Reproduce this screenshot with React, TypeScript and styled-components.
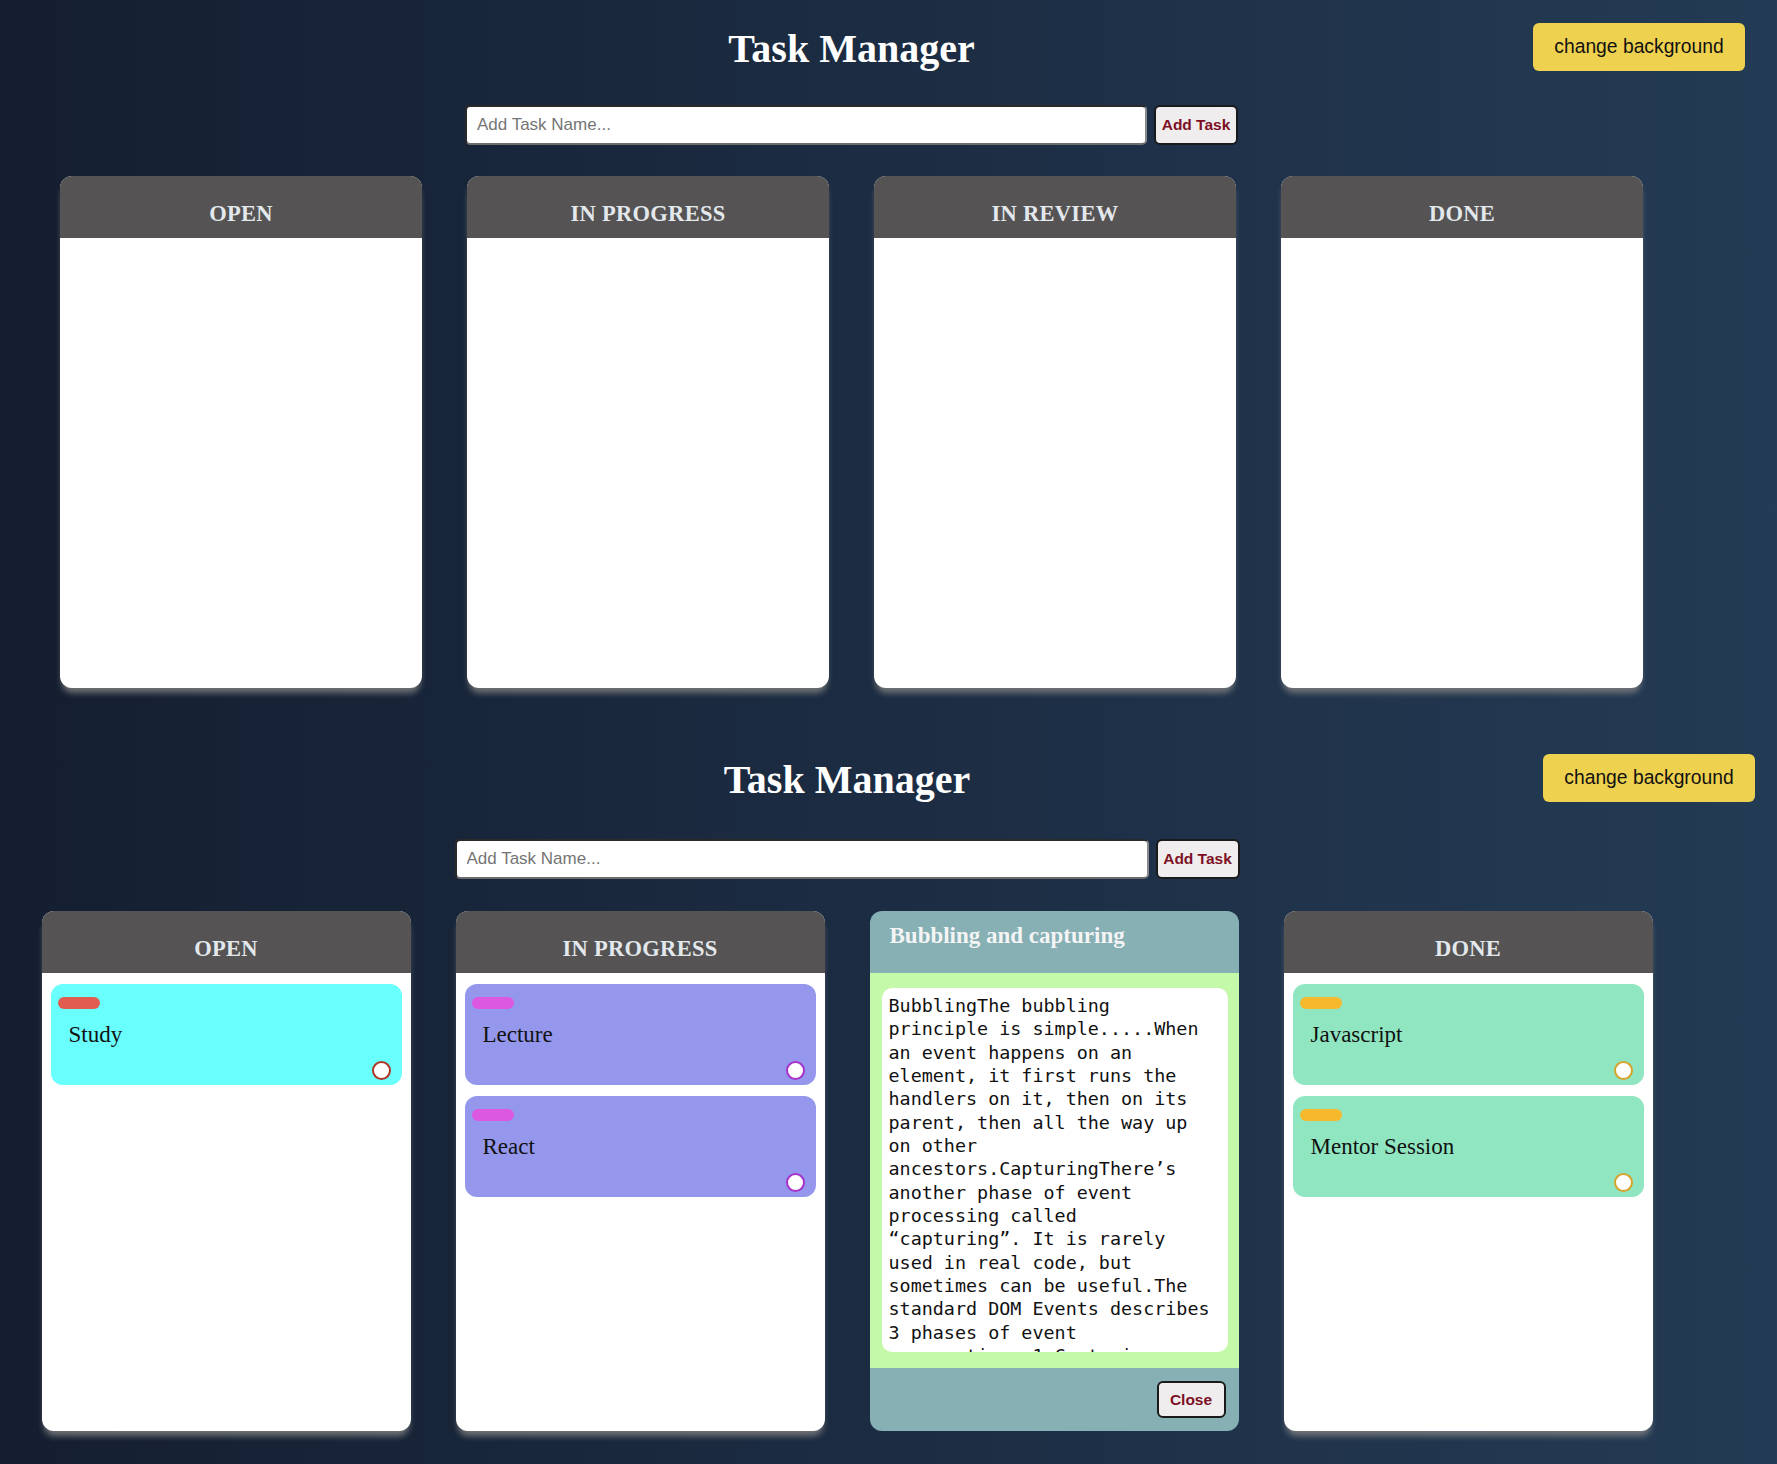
import React from "react";
import styled, { createGlobalStyle } from "styled-components";

const GlobalStyle = createGlobalStyle`
  html, body { margin: 0; padding: 0; }
  body {
    min-height: 1464px;
    background: linear-gradient(to right, #141e30, #243b55);
    font-family: "Liberation Sans", Arial, sans-serif;
  }
`;

const Section = styled.section<{ $top: number; $h: number }>`
  box-sizing: border-box;
  height: ${(p) => p.$h}px;
  padding-top: ${(p) => p.$top}px;
`;

const Header = styled.header<{ $center: number }>`
  display: grid;
  grid-template-columns: ${(p) => p.$center - 250}px 500px 1fr;
  align-items: center;
  height: 48px;
`;

const Title = styled.h1`
  grid-column: 2;
  margin: 0;
  padding-top: 3px;
  text-align: center;
  font-family: "Liberation Serif", "Times New Roman", serif;
  font-weight: 700;
  font-size: 40px;
  color: #ffffff;
`;

const BgButton = styled.button<{ $right: number }>`
  grid-column: 3;
  justify-self: end;
  margin-right: ${(p) => p.$right}px;
  width: 212px;
  height: 48px;
  border: none;
  border-radius: 6px;
  background: #efd150;
  color: #111;
  font-family: "Liberation Sans", Arial, sans-serif;
  font-size: 19.3px;
  padding: 0;
  cursor: pointer;
`;

const Form = styled.form<{ $center: number; $mt: number }>`
  display: flex;
  justify-content: center;
  gap: 7px;
  width: ${(p) => p.$center * 2}px;
  margin-top: ${(p) => p.$mt}px;
`;

const TaskInput = styled.input<{ $w: number }>`
  box-sizing: border-box;
  width: ${(p) => p.$w}px;
  height: 40px;
  border-radius: 5px;
  border: 2px solid;
  border-color: #2a2a2a #8a8a8a #6c6c6c #2a2a2a;
  background: #fff;
  padding: 0 10px;
  font-family: "Liberation Sans", Arial, sans-serif;
  font-size: 17px;
  color: #222;
  &::placeholder {
    color: #757575;
  }
`;

const DarkButton = styled.button<{ $w: number; $h: number }>`
  box-sizing: border-box;
  width: ${(p) => p.$w}px;
  height: ${(p) => p.$h}px;
  border: 2px solid #1a1a1a;
  border-radius: 6px;
  background: #efeded;
  color: #7d1025;
  font-family: "Liberation Sans", Arial, sans-serif;
  font-weight: 700;
  font-size: 15.5px;
  padding: 0;
  cursor: pointer;
`;

const Board = styled.div<{ $center: number; $gap: number; $mt: number }>`
  display: flex;
  justify-content: center;
  gap: ${(p) => p.$gap}px;
  width: ${(p) => p.$center * 2}px;
  margin-top: ${(p) => p.$mt}px;
`;

const Column = styled.div<{ $w: number; $h: number }>`
  box-sizing: border-box;
  width: ${(p) => p.$w}px;
  height: ${(p) => p.$h}px;
  display: flex;
  flex-direction: column;
  border-radius: 12px;
  background: #ffffff;
  overflow: hidden;
  box-shadow: 0 7px 6px -2px rgba(128, 128, 128, 0.85);
`;

const ColumnHeader = styled.div`
  box-sizing: border-box;
  height: 62px;
  flex: none;
  padding-top: 25px;
  background: #555353;
  text-align: center;
  font-family: "Liberation Serif", "Times New Roman", serif;
  font-weight: 700;
  font-size: 22.5px;
  line-height: 26px;
  letter-spacing: 0.3px;
  color: #e2e8ec;
`;

const ColumnBody = styled.div`
  flex: 1;
  display: flex;
  flex-direction: column;
  gap: 11px;
  padding: 11px 9px;
`;

const Card = styled.div<{ $bg: string }>`
  box-sizing: border-box;
  height: 101px;
  flex: none;
  display: flex;
  flex-direction: column;
  border-radius: 12px;
  background: ${(p) => p.$bg};
  padding: 13px 11px 5px 7px;
`;

const Tag = styled.span<{ $color: string }>`
  display: block;
  width: 42px;
  height: 12px;
  border-radius: 6px;
  background: ${(p) => p.$color};
`;

const CardTitle = styled.div`
  margin-top: 13px;
  padding-left: 11px;
  font-family: "Liberation Serif", "Times New Roman", serif;
  font-size: 23px;
  line-height: 26px;
  color: #111;
`;

const Check = styled.span<{ $color: string }>`
  box-sizing: border-box;
  margin-top: auto;
  align-self: flex-end;
  width: 19px;
  height: 19px;
  border-radius: 50%;
  border: 2px solid ${(p) => p.$color};
  background: #ffffff;
`;

const Detail = styled.div<{ $w: number; $h: number }>`
  box-sizing: border-box;
  width: ${(p) => p.$w}px;
  height: ${(p) => p.$h}px;
  display: flex;
  flex-direction: column;
  border-radius: 12px;
  overflow: hidden;
  background: #86b0b4;
`;

const DetailHeader = styled.div`
  box-sizing: border-box;
  height: 62px;
  flex: none;
  padding: 12px 18px 0 20px;
  font-family: "Liberation Serif", "Times New Roman", serif;
  font-weight: 700;
  font-size: 23px;
  line-height: 26px;
  color: #f4f4f4;
`;

const DetailBody = styled.div`
  box-sizing: border-box;
  height: 395px;
  flex: none;
  background: #c3f9a8;
  padding: 15px 11px 16px 12px;
`;

const TextBox = styled.div`
  box-sizing: border-box;
  height: 100%;
  border-radius: 10px;
  background: #ffffff;
  overflow: hidden;
  padding: 6px 12px 0 7px;
  font-family: "DejaVu Sans Mono", "Liberation Mono", monospace;
  font-size: 18.4px;
  line-height: 23.33px;
  color: #111;
`;

const DetailFooter = styled.div`
  flex: 1;
  display: flex;
  justify-content: flex-end;
  align-items: center;
  padding-right: 13px;
`;

type Task = { name: string; bg: string; tag: string; ring: string };

const study: Task = { name: "Study", bg: "#69fffd", tag: "#e05d4f", ring: "#b03525" };
const lecture: Task = { name: "Lecture", bg: "#9497eb", tag: "#dd58e0", ring: "#a533c9" };
const react: Task = { name: "React", bg: "#9497eb", tag: "#dd58e0", ring: "#a533c9" };
const js: Task = { name: "Javascript", bg: "#8fe6c1", tag: "#f6b92e", ring: "#d6a42b" };
const mentor: Task = { name: "Mentor Session", bg: "#8fe6c1", tag: "#f6b92e", ring: "#d6a42b" };

const DETAIL_TEXT =
  "BubblingThe bubbling principle is simple.....When an event happens on an element, it first runs the handlers on it, then on its parent, then all the way up on other ancestors.CapturingThere\u2019s another phase of event processing called \u201Ccapturing\u201D. It is rarely used in real code, but sometimes can be useful.The standard DOM Events describes 3 phases of event propagation: 1.Capturing phase \u2013 the event goes down to the element. 2.Target phase \u2013 the event reached the target element. 3.Bubbling phase \u2013 the event bubbles up from the element.";

type SectionConf = {
  center: number;
  top: number;
  height: number;
  formMt: number;
  boardMt: number;
  colW: number;
  colH: number;
  gap: number;
  inputW: number;
  btnRight: number;
  columns: { title: string; tasks: Task[]; detail?: boolean }[];
};

const sections: SectionConf[] = [
  {
    center: 851.5,
    top: 22,
    height: 732,
    formMt: 35,
    boardMt: 31,
    colW: 362,
    colH: 512,
    gap: 45,
    inputW: 682,
    btnRight: 32,
    columns: [
      { title: "OPEN", tasks: [] },
      { title: "IN PROGRESS", tasks: [] },
      { title: "IN REVIEW", tasks: [] },
      { title: "DONE", tasks: [] },
    ],
  },
  {
    center: 847,
    top: 21,
    height: 732,
    formMt: 38,
    boardMt: 32,
    colW: 369,
    colH: 520,
    gap: 45,
    inputW: 694,
    btnRight: 22,
    columns: [
      { title: "OPEN", tasks: [study] },
      { title: "IN PROGRESS", tasks: [lecture, react] },
      { title: "IN REVIEW", tasks: [], detail: true },
      { title: "DONE", tasks: [js, mentor] },
    ],
  },
];

function TaskCard({ task }: { task: Task }) {
  return (
    <Card $bg={task.bg}>
      <Tag $color={task.tag} />
      <CardTitle>{task.name}</CardTitle>
      <Check $color={task.ring} />
    </Card>
  );
}

function ManagerSection({ conf }: { conf: SectionConf }) {
  return (
    <Section $top={conf.top} $h={conf.height}>
      <Header $center={conf.center}>
        <Title>Task Manager</Title>
        <BgButton $right={conf.btnRight}>change background</BgButton>
      </Header>
      <Form $center={conf.center} $mt={conf.formMt} onSubmit={(e) => e.preventDefault()}>
        <TaskInput $w={conf.inputW} placeholder="Add Task Name..." />
        <DarkButton $w={84} $h={40} type="submit">
          Add Task
        </DarkButton>
      </Form>
      <Board $center={conf.center} $gap={conf.gap} $mt={conf.boardMt}>
        {conf.columns.map((col) =>
          col.detail ? (
            <Detail key={col.title} $w={conf.colW} $h={conf.colH}>
              <DetailHeader>Bubbling and capturing</DetailHeader>
              <DetailBody>
                <TextBox>{DETAIL_TEXT}</TextBox>
              </DetailBody>
              <DetailFooter>
                <DarkButton $w={69} $h={37} type="button">
                  Close
                </DarkButton>
              </DetailFooter>
            </Detail>
          ) : (
            <Column key={col.title} $w={conf.colW} $h={conf.colH}>
              <ColumnHeader>{col.title}</ColumnHeader>
              <ColumnBody>
                {col.tasks.map((t) => (
                  <TaskCard key={t.name} task={t} />
                ))}
              </ColumnBody>
            </Column>
          )
        )}
      </Board>
    </Section>
  );
}

export default function App() {
  return (
    <>
      <GlobalStyle />
      {sections.map((s, i) => (
        <ManagerSection key={i} conf={s} />
      ))}
    </>
  );
}
